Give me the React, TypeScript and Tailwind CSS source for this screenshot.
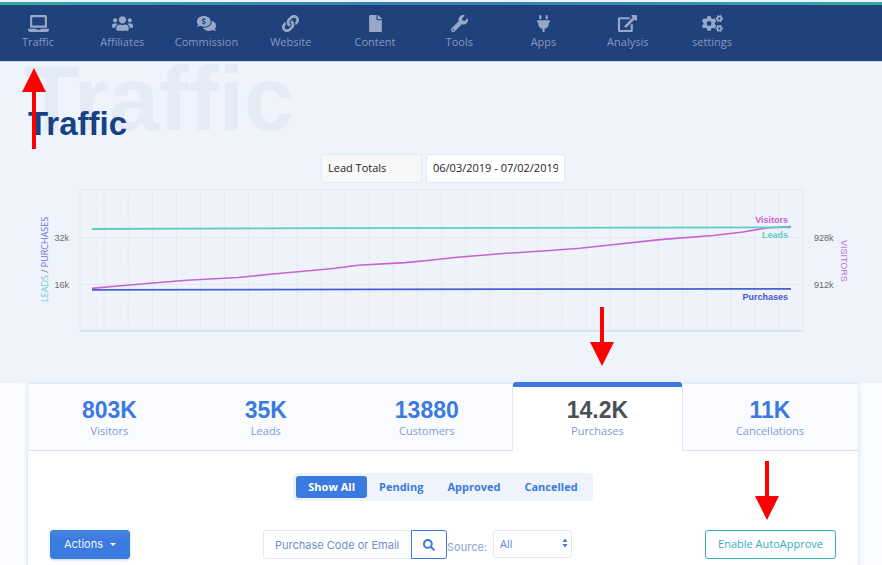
import React from "react";
import {
  FaLaptop,
  FaUsers,
  FaCommentsDollar,
  FaLink,
  FaFile,
  FaWrench,
  FaPlug,
  FaCogs,
  FaSearch,
} from "react-icons/fa";

type NavIcon = React.ComponentType<{ className?: string }>;

function ExternalLinkIcon({ className }: { className?: string }) {
  return (
    <svg viewBox="0 0 576 512" className={className} fill="currentColor" aria-hidden>
      <path d="M576 24v127.984c0 21.461-25.960 31.980-40.971 16.971l-35.707-35.709-243.523 243.523c-9.373 9.373-24.568 9.373-33.941 0l-22.627-22.627c-9.373-9.373-9.373-24.569 0-33.941L442.756 76.676l-35.703-35.705C391.982 25.900 402.656 0 424.024 0H552c13.255 0 24 10.745 24 24zM407.029 270.794l-16 16A23.999 23.999 0 0 0 384 303.765V448H64V128h264a24.003 24.003 0 0 0 16.970-7.029l16-16C376.089 89.851 365.381 64 344 64H48C21.490 64 0 85.490 0 112v352c0 26.510 21.490 48 48 48h352c26.510 0 48-21.490 48-48V287.764c0-21.382-25.852-32.090-40.971-16.970z" />
    </svg>
  );
}

const navItems: { label: string; icon: NavIcon }[] = [
  { label: "Traffic", icon: FaLaptop },
  { label: "Affiliates", icon: FaUsers },
  { label: "Commission", icon: FaCommentsDollar },
  { label: "Website", icon: FaLink },
  { label: "Content", icon: FaFile },
  { label: "Tools", icon: FaWrench },
  { label: "Apps", icon: FaPlug },
  { label: "Analysis", icon: ExternalLinkIcon },
  { label: "settings", icon: FaCogs },
];

const stats = [
  { value: "803K", label: "Visitors" },
  { value: "35K", label: "Leads" },
  { value: "13880", label: "Customers" },
  { value: "14.2K", label: "Purchases", active: true },
  { value: "11K", label: "Cancellations" },
];

const filters = ["Show All", "Pending", "Approved", "Cancelled"];

const VISITORS_LINE =
  "64,100.4 90,98 125,95 159,92.3 210,89.5 242,86.3 292,81.7 307,80.3 330,77.3 377,74.6 402,72.3 427,69.5 472,65.7 522,62.5 552,60.2 582,57 632,51.6 685,47.5 715,44 738,40 763,38.5";

function NavBar() {
  return (
    <header className="border-t-2 border-[#eef3fc]">
      <div className="h-[3px] bg-linear-to-r from-[#37a9a4] via-[#377ab9] to-[#37a9a4]" />
      <nav aria-label="Main" className="bg-[#1f427c]">
        <ul className="flex h-14 max-w-[746px] justify-between pl-1">
          {navItems.map(({ label, icon: Icon }) => (
            <li key={label} className="w-[68px]">
              <a href="#" className="flex flex-col items-center gap-0.5 pt-2.5 text-[11px] leading-4 text-[#8499bf]">
                <Icon className="h-[17px] w-[21px] text-[#98a8c9]" />
                <span>{label}</span>
              </a>
            </li>
          ))}
        </ul>
      </nav>
    </header>
  );
}

function TrafficChart() {
  const columns = Array.from({ length: 31 }, (_, i) => 52 + i * 24.1);
  const minorRows = [10, 20, 30, 40, 58, 68, 77, 86, 105, 115, 124, 133];
  return (
    <svg viewBox="0 0 826 150" className="h-auto w-full" role="img" aria-label="Visitors, leads and purchases">
      {minorRows.map((y) => (
        <line key={y} x1="52" x2="775" y1={y} y2={y} stroke="#edf0f4" />
      ))}
      {columns.map((x) => (
        <line key={x} x1={x} x2={x} y1="2" y2="143" stroke="#e6e9ee" />
      ))}
      {[1.5, 49.5, 96.5].map((y) => (
        <line key={y} x1="52" x2="775" y1={y} y2={y} stroke="#e6e9ee" />
      ))}
      <line x1="52" x2="775" y1="143" y2="143" stroke="#dde3ee" strokeWidth="2" />
      <polyline points={VISITORS_LINE} fill="none" stroke="#c563d3" strokeWidth="1.6" />
      <polyline points="64,41 300,40.2 763,39.4" fill="none" stroke="#5fcdc4" strokeWidth="1.8" />
      <polyline points="64,101.8 763,100.8" fill="none" stroke="#4a5fd6" strokeWidth="1.8" />
      <g className="font-['Liberation_Sans',sans-serif] text-[9px]" fill="#6a6a6a">
        <text x="41" y="53" textAnchor="end">32k</text>
        <text x="41" y="100" textAnchor="end">16k</text>
        <text x="786" y="53">928k</text>
        <text x="786" y="100">912k</text>
      </g>
      <g className="font-['Liberation_Sans',sans-serif] text-[9px] font-bold">
        <text x="760" y="35" textAnchor="end" fill="#c563d3">Visitors</text>
        <text x="760" y="50" textAnchor="end" fill="#5fcdc4">Leads</text>
        <text x="760" y="112" textAnchor="end" fill="#4a55cc">Purchases</text>
      </g>
      <text transform="translate(20 114) rotate(-90)" className="text-[9px]" fill="#777777">
        <tspan fill="#6fd0cb">LEADS</tspan> / <tspan fill="#6673df">PURCHASES</tspan>
      </text>
      <text
        transform="translate(813 52) rotate(90)"
        className="font-['Liberation_Sans',sans-serif] text-[9px]"
        fill="#c76cd8"
      >
        VISITORS
      </text>
    </svg>
  );
}

function Hero() {
  return (
    <section className="overflow-hidden bg-[#eef3fc] px-7 pb-[45px] shadow-[inset_0_1px_0_#cbd6ea]">
      <div className="relative h-[93px] pt-[45px]">
        <span
          aria-hidden
          className="absolute -left-1 top-0 font-['Liberation_Sans',sans-serif] text-[90px] font-bold leading-[76px] text-[#e5ebf5]"
        >
          Traffic
        </span>
        <h1 className="relative font-['Liberation_Sans',sans-serif] text-[33px] font-bold leading-9 text-[#164185]">
          Traffic
        </h1>
      </div>
      <form className="flex justify-center gap-1 pl-1">
        <select
          aria-label="Report"
          className="h-[29px] w-[101px] appearance-none rounded-[3px] border border-[#dfe9fb] bg-[#f8f8f8] px-1.5 text-[11px] text-[#222222]"
        >
          <option>Lead Totals</option>
        </select>
        <input
          type="text"
          aria-label="Date range"
          defaultValue="06/03/2019 - 07/02/2019"
          className="h-[29px] w-[139px] rounded-[3px] border border-[#dfe9fb] bg-white px-1.5 pb-0.5 text-[11px] text-[#222222]"
        />
      </form>
      <div className="pt-[5px]">
        <TrafficChart />
      </div>
    </section>
  );
}

function StatTabs() {
  return (
    <div role="tablist" className="flex">
      {stats.map(({ value, label, active }) => (
        <button
          key={label}
          type="button"
          role="tab"
          aria-selected={!!active}
          className={
            active
              ? "relative z-10 flex h-[67px] flex-auto flex-col items-center justify-start bg-white pt-3 shadow-[-1px_0_#dfe8f6,1px_0_#dfe8f6]"
              : "relative flex h-[67px] flex-auto flex-col items-center justify-start border-b border-[#dce4f0] bg-[#fafbff] pt-3"
          }
        >
          {active && <span className="absolute inset-x-0 -top-0.5 h-[5px] rounded-t-[3px] bg-[#3b7adf]" />}
          <span
            className={
              active
                ? "font-['Liberation_Sans',sans-serif] text-[23px] font-bold leading-7 text-[#495057]"
                : "font-['Liberation_Sans',sans-serif] text-[23px] font-bold leading-7 text-[#3b7adf]"
            }
          >
            {value}
          </span>
          <span className="text-[11px] leading-[14px] text-[#7f9bcc]">{label}</span>
        </button>
      ))}
    </div>
  );
}

function Toolbar() {
  return (
    <div className="flex items-start justify-between px-[22px]">
      <button
        type="button"
        className="flex h-[29px] w-20 items-center justify-center gap-[7px] rounded-[3px] border border-[#3b7adf] bg-linear-to-b from-[#4a84e2] to-[#3b7adf] to-30% font-['Inter',sans-serif] text-[11px] text-[#eef3fc] shadow-[0_1px_3px_#c3d6f6]"
      >
        Actions
        <span className="border-x-[3px] border-t-[3px] border-x-transparent border-t-white" />
      </button>
      <form className="flex items-start">
        <input
          type="text"
          aria-label="Search purchases"
          placeholder="Purchase Code or Email"
          className="h-[29px] w-[148px] rounded-l-[3px] border border-r-0 border-[#dfe9fb] bg-white pl-[11px] pr-3 font-['Inter',sans-serif] text-[11px] text-[#6f8fca] placeholder:text-[#6f8fca]"
        />
        <button
          type="button"
          aria-label="Search"
          className="flex h-[29px] w-9 items-center justify-center rounded-r-[3px] border border-[#3b7adf] bg-white text-[#3b7adf]"
        >
          <FaSearch size={12} aria-hidden />
        </button>
        <label htmlFor="source" className="w-[46px] pt-2 font-['Inter',sans-serif] text-[11px] leading-[18px] text-[#88a2d2]">
          Source:
        </label>
        <span className="relative">
          <select
            id="source"
            className="h-7 w-[79px] appearance-none rounded border border-[#dfe9fb] bg-white px-1.5 text-[11px] text-[#5a87de]"
          >
            <option>All</option>
          </select>
          <svg viewBox="0 0 6 10" className="pointer-events-none absolute right-1 top-2 h-2.5 w-1.5" aria-hidden>
            <path d="M3 0.500L5.500 4H0.500ZM3 9.500L0.500 6H5.500Z" fill="#3b7adf" />
          </svg>
        </span>
      </form>
      <button type="button" className="h-[29px] rounded-[3px] border border-[#36adbb] bg-white px-3 text-[11px] text-[#36adbb]">
        Enable AutoApprove
      </button>
    </div>
  );
}

function RedArrow({ className, length }: { className: string; length: number }) {
  return (
    <svg width="24" height={length} viewBox={`0 0 24 ${length}`} className={className} aria-hidden>
      <path d={`M10 0H14V${length - 24}H24L12 ${length}L0 ${length - 24}H10Z`} fill="#ff0000" />
    </svg>
  );
}

export default function App() {
  return (
    <div className="relative flex min-h-screen flex-col bg-[#fafcff] font-['Open_Sans',sans-serif]">
      <NavBar />
      <Hero />
      <main className="ml-[27px] mr-[23px] flex flex-1 flex-col border border-b-0 border-[#e2eaf7] bg-white shadow-[0_1px_6px_#e3ebf8]">
        <StatTabs />
        <div className="flex justify-center pb-[29px] pt-[22px]">
          <div role="group" aria-label="Status" className="flex rounded bg-[#eef3fc] p-[3px]">
            {filters.map((name, i) => (
              <button
                key={name}
                type="button"
                aria-pressed={i === 0}
                className={
                  i === 0
                    ? "h-[22px] rounded-[3px] bg-[#3b7adf] px-3 text-[11px] font-bold text-white"
                    : "h-[22px] rounded-[3px] px-3 text-[11px] font-bold text-[#3b7adf]"
                }
              >
                {name}
              </button>
            ))}
          </div>
        </div>
        <Toolbar />
      </main>
      <RedArrow className="absolute left-[22px] top-[68px] rotate-180" length={81} />
      <RedArrow className="absolute left-[590px] top-[307px]" length={59} />
      <RedArrow className="absolute left-[755px] top-[461px]" length={59} />
    </div>
  );
}
